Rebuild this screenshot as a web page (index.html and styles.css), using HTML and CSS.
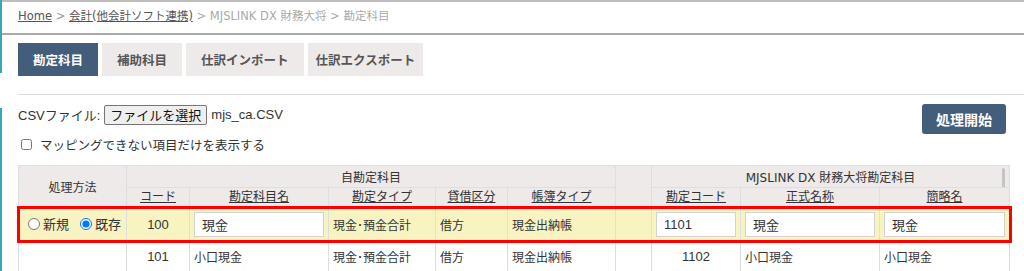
FILE: index.html
```html
<!DOCTYPE html>
<html lang="ja">
<head>
  <meta charset="UTF-8">
  <title>勘定科目 | MJSLINK DX 財務大将</title>
  <link rel="stylesheet" href="styles.css">
</head>
<body>

  <!-- パンくず -->
  <div class="crumbs">
    <a href="#">Home</a> <span class="sep">&gt;</span> <a href="#">会計(他会計ソフト連携)</a>
    <span class="here">&gt; MJSLINK DX 財務大将 &gt; 勘定科目</span>
  </div>

  <nav class="tabs">
    <a class="tab active" href="#">勘定科目</a>
    <a class="tab" href="#">補助科目</a>
    <a class="tab" href="#">仕訳インポート</a>
    <a class="tab long" href="#">仕訳エクスポート</a>
  </nav>

  <hr class="rule">

  <div class="form">
    <div class="form-left">
      <div class="csv-row">
        <span>CSVファイル:</span>
        <button class="file-btn" type="button">ファイルを選択</button>
        <span>mjs_ca.CSV</span>
      </div>
      <label class="only-row"><input type="checkbox"> マッピングできない項目だけを表示する</label>
    </div>
    <button class="run-btn" type="button">処理開始</button>
  </div>

  <table class="map">
    <colgroup>
      <col style="width:108px"><col style="width:63px"><col style="width:139px">
      <col style="width:107px"><col style="width:72px"><col style="width:108px">
      <col style="width:36px"><col style="width:89px"><col style="width:139px">
      <col style="width:130px">
    </colgroup>
    <thead>
      <tr class="group">
        <th rowspan="2">処理方法</th>
        <th colspan="5">自勘定科目</th>
        <th rowspan="2"></th>
        <th colspan="3" class="mjs">MJSLINK DX 財務大将勘定科目<span class="thumb"></span></th>
      </tr>
      <tr class="cols">
        <th><a href="#">コード</a></th>
        <th><a href="#">勘定科目名</a></th>
        <th><a href="#">勘定タイプ</a></th>
        <th><a href="#">貸借区分</a></th>
        <th><a href="#">帳簿タイプ</a></th>
        <th><a href="#">勘定コード</a></th>
        <th><a href="#">正式名称</a></th>
        <th><a href="#">簡略名</a></th>
      </tr>
    </thead>
    <tbody>
      <tr class="picked">
        <td class="how">
          <label><input type="radio" name="how1">新規</label>
          <label><input type="radio" name="how1" checked>既存</label>
        </td>
        <td class="num">100</td>
        <td><input class="cell-input" value="現金"></td>
        <td>現金･預金合計</td>
        <td>借方</td>
        <td>現金出納帳</td>
        <td></td>
        <td><input class="cell-input" value="1101"></td>
        <td><input class="cell-input" value="現金"></td>
        <td><input class="cell-input" value="現金"></td>
      </tr>
      <tr>
        <td></td>
        <td class="num">101</td>
        <td>小口現金</td>
        <td>現金･預金合計</td>
        <td>借方</td>
        <td>現金出納帳</td>
        <td></td>
        <td class="num">1102</td>
        <td>小口現金</td>
        <td>小口現金</td>
      </tr>
    </tbody>
  </table>

</body>
</html>
```

FILE: styles.css
```css
body {
  margin: 0; padding: 0;
  background: #fff;
  color: #333;
  font-family: "Liberation Sans", "Noto Sans CJK JP", sans-serif;
  font-size: 13px;
}
/* ウィンドウ左端の線 */
body::before {
  content: "";
  position: fixed;
  left: 0; top: 0;
  width: 2px; height: 100%;
  background: linear-gradient(#3aa5bb 0, #3aa5bb 73px, transparent 73px, transparent 108px, #3aa5bb 108px);
}

.crumbs {
  height: 31px;
  line-height: 29px;
  padding: 0 18px;
  border-top: 2px solid #bdbdbd;
  border-bottom: 2px solid #aaa;
  font-family: "DejaVu Sans", "Noto Sans CJK JP", sans-serif;
  font-size: 11.5px;
  color: #aaa;
  white-space: nowrap;
}
.crumbs a { color: #555; }
.crumbs .sep { color: #999; }

.tabs {
  display: flex;
  gap: 4px;
  margin: 8px 0 0 18px;
}
.tab {
  height: 33px;
  line-height: 33px;
  padding: 0 15px;
  background: #eeeaea;
  color: #555;
  font-family: "Noto Sans CJK JP", sans-serif;
  font-size: 12.5px;
  font-weight: bold;
  text-decoration: none;
}
.tab.long { padding: 0 8px; }
.tab.active { background: #445d7a; color: #fff; }

.rule {
  margin: 18px 0 0 18px;
  border: none;
  border-top: 1px solid #dcdcdc;
}

.form {
  display: flex;
  justify-content: space-between;
  align-items: flex-start;
  margin: 9px 18px 0 18px;
}
.csv-row {
  display: flex;
  align-items: center;
  gap: 4px;
  height: 21px;
}
.file-btn {
  height: 20px;
  padding: 0 5px;
  border: 1px solid #767676;
  border-radius: 2px;
  background: #efefef;
  color: #111;
  font-family: "Noto Sans CJK JP", sans-serif;
  font-size: 13px;
  line-height: 18px;
}
.only-row {
  display: flex;
  align-items: center;
  gap: 8px;
  margin-top: 9px;
  height: 20px;
  font-family: "Noto Sans CJK JP", sans-serif;
  font-size: 12.5px;
  color: #333;
}
.only-row input { width: 11px; height: 11px; margin: 0 0 0 3px; }
.run-btn {
  height: 30px;
  padding: 0 14px;
  border: none;
  border-radius: 3px;
  background: #445d7a;
  color: #fff;
  font-family: "Noto Sans CJK JP", sans-serif;
  font-size: 14px;
  font-weight: bold;
}

.map {
  margin: 11px 0 0 18px;
  width: 991px;
  table-layout: fixed;
  border-collapse: collapse;
  font-family: "Noto Sans CJK JP", sans-serif;
  font-size: 12px;
}
.map th, .map td {
  border: 1px solid #dedede;
  padding: 0 4px;
  white-space: nowrap;
  overflow: hidden;
}
.map th {
  background: #eeeae9;
  font-weight: normal;
  color: #333;
  text-align: center;
  font-family: "DejaVu Sans", "Noto Sans CJK JP", sans-serif;
}
.map .group th { height: 21px; }
.map .cols th { height: 19px; line-height: 17px; }
.map th a { color: #333; }
.map .mjs { position: relative; }
.thumb {
  position: absolute;
  right: 4px; top: 2px;
  width: 3px; height: 21px;
  background: #c4c4c4;
  border-radius: 2px;
}
.map td { height: 31px; background: #fff; }
.map td.num {
  text-align: center;
  font-family: "Liberation Sans", sans-serif;
  font-size: 13px;
}
.map tr.picked { outline: 3px solid #f00; outline-offset: -1px; }
.map tr.picked td { height: 32px; background: #f7f4c2; }
.map td.how { padding-left: 9px; font-size: 13px; }
.how label { display: inline-flex; align-items: center; gap: 3px; margin-right: 8px; }
.how input { width: 12px; height: 12px; margin: 0; }
.cell-input {
  box-sizing: border-box;
  width: 100%;
  height: 25px;
  padding: 0 7px;
  border: 1px solid #d2d2d2;
  background: #fff;
  color: #333;
  font-family: "Liberation Sans", "Noto Sans CJK JP", sans-serif;
  font-size: 13px;
}
```
